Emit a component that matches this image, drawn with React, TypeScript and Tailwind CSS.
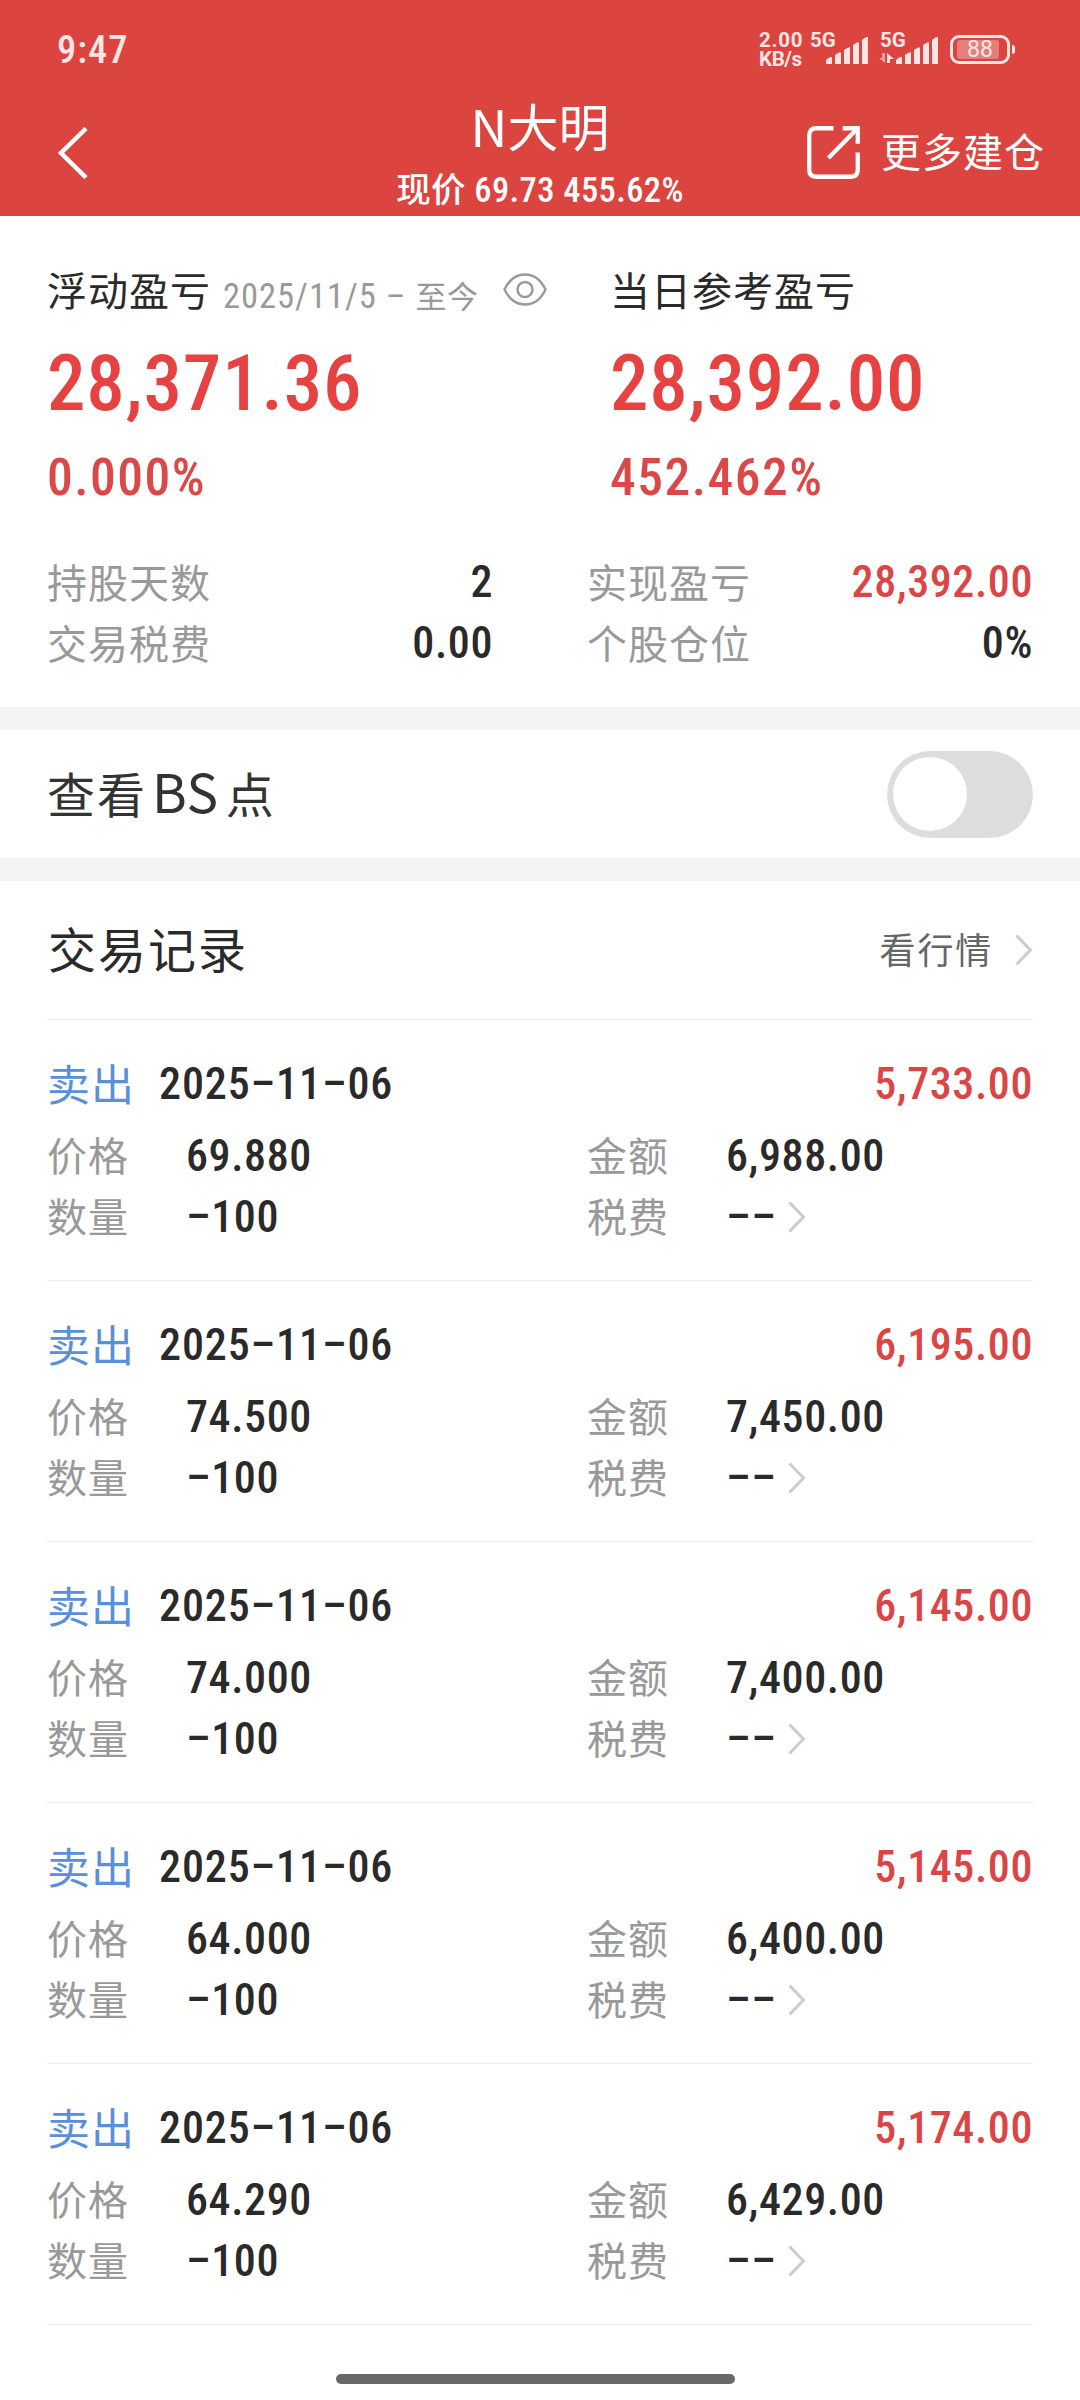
import { useState } from 'react'

interface TradeRecord {
  date: string
  profit: string
  price: string
  amount: string
  quantity: string
}

const RECORDS: TradeRecord[] = [
  { date: '2025–11–06', profit: '5,733.00', price: '69.880', amount: '6,988.00', quantity: '–100' },
  { date: '2025–11–06', profit: '6,195.00', price: '74.500', amount: '7,450.00', quantity: '–100' },
  { date: '2025–11–06', profit: '6,145.00', price: '74.000', amount: '7,400.00', quantity: '–100' },
  { date: '2025–11–06', profit: '5,145.00', price: '64.000', amount: '6,400.00', quantity: '–100' },
  { date: '2025–11–06', profit: '5,174.00', price: '64.290', amount: '6,429.00', quantity: '–100' },
]

const NUM = "font-['Roboto_Condensed','Noto_Sans_CJK_SC',sans-serif] font-medium"

function Chevron() {
  return (
    <svg width="18" height="32" viewBox="0 0 18 32" fill="none" className="shrink-0">
      <path d="M1.5 1.5L15.5 16L1.5 30.5" stroke="#cccccc" strokeWidth="3" />
    </svg>
  )
}

function Signal() {
  return (
    <svg width="42" height="27" viewBox="0 0 42 27" fill="#ffe6e5">
      <path d="M0 27V23L4 20H6V27Z" />
      <path d="M9 27V18L13 15.500H15V27Z" />
      <path d="M18 27V13L22 10.500H24V27Z" />
      <path d="M27 27V8L31 5.500H33V27Z" />
      <path d="M36 27V3L40 0H42V27Z" />
    </svg>
  )
}

function StatusBar() {
  return (
    <div className="flex h-[100px] justify-between pl-[57px] pr-[65px] text-[#ffe6e5]">
      <span className={`${NUM} pt-[30px] text-[38.5px] leading-[40px] tracking-[1px]`}>9:47</span>
      <div className="flex pt-[31px] font-['Roboto',sans-serif] text-[20.5px] font-bold leading-[19px]">
        <div className="w-[51px]">
          <div className="tracking-[0.8px]">2.00</div>
          <div className="tracking-[-0.4px]">KB/s</div>
        </div>
        <div className="relative w-[70px]">
          <span>5G</span>
          <div className="absolute left-[16px] top-[6px]"><Signal /></div>
        </div>
        <div className="relative w-[70px]">
          <span>5G</span>
          <svg width="16" height="11" viewBox="0 0 16 11" className="absolute left-[-1px] top-[22px]">
            <path d="M6 0V10L0 5H3V0Z" fill="#f0a09e" />
            <path d="M8 10V0L15 6H11V10Z" fill="#ffe6e5" />
          </svg>
          <div className="absolute left-[16px] top-[6px]"><Signal /></div>
        </div>
        <div className="mt-1 flex h-[29px] items-center">
          <div className="relative h-[29px] w-[60px] rounded-[9px] border-[3px] border-[#ffe6e5]">
            <div className="absolute left-[4px] top-[2px] h-[19px] w-[42px] rounded-[3px] bg-[#e57f7c]" />
            <div className="relative text-center text-[23px] font-normal leading-[24px]">88</div>
          </div>
          <div className="ml-[2px] h-[9px] w-[3px] rounded-r-full bg-[#ffe6e5]" />
        </div>
      </div>
    </div>
  )
}

function Header() {
  return (
    <header className="h-[216px] bg-[#dc4440] text-white">
      <StatusBar />
      <div className="flex h-[116px] justify-between">
        <button className="flex w-[340px] pl-[56px] pt-[27px]">
          <svg width="32" height="52" viewBox="0 0 32 52" fill="none">
            <path d="M30 1.500L5 26L30 50.500" stroke="#ffffff" strokeWidth="4.500" />
          </svg>
        </button>
        <div className="text-center">
          <h1 className="text-[51px] leading-[50px]">N大明</h1>
          <p className={`${NUM} mt-5 whitespace-nowrap text-[34.5px] leading-[40px] tracking-[0.4px]`}>现价 69.73 455.62%</p>
        </div>
        <button className="flex w-[340px] justify-end pr-[35px] pt-[26px]">
          <svg width="53" height="53" viewBox="0 0 52 52" fill="none" stroke="#ffffff" strokeWidth="4.200">
            <path d="M26 2.200H9Q2.200 2.200 2.200 9V43Q2.200 49.800 9 49.800H43Q49.800 49.800 49.800 43V26" />
            <path d="M35 2.200H49.800V17.500" />
            <path d="M21 31.500L49 3" />
          </svg>
          <span className="ml-[21px] text-[40px] leading-[49px] tracking-[1px]">更多建仓</span>
        </button>
      </div>
    </header>
  )
}

function Stat({ label, value, red }: { label: string; value: string; red?: boolean }) {
  return (
    <div className="flex h-[61px] items-center justify-between">
      <span className="text-[40px] tracking-[1px] text-[#999999]">{label}</span>
      <span className={`${NUM} pt-px text-[44px] tracking-[0.6px] ${red ? 'text-[#db4545]' : 'text-[#2a2a2a]'}`}>{value}</span>
    </div>
  )
}

function Profit({ amount, percent }: { amount: string; percent: string }) {
  return (
    <>
      <div className={`${NUM} mt-8 text-[77px] leading-[80px] tracking-[0.8px] text-[#e64242]`}>{amount}</div>
      <div className={`${NUM} mt-[26px] text-[51.5px] leading-[56px] tracking-[1.5px] text-[#db4848]`}>{percent}</div>
    </>
  )
}

function Summary() {
  return (
    <section className="h-[491px] px-[47px] pt-12">
      <div className="grid grid-cols-[563px_1fr]">
        <div>
          <div className="flex h-12 items-start">
            <h2 className="pt-px text-[40px] leading-[48px] tracking-[1px]">浮动盈亏</h2>
            <span className="ml-[12px] mt-[8px] w-[280px] whitespace-nowrap font-['Roboto_Condensed','Noto_Sans_CJK_SC',sans-serif] text-[34.5px] leading-[48px] tracking-[1px] text-[#999999]">
              2025/11/5 – <span className="text-[31px] tracking-[0.5px]">至今</span>
            </span>
            <svg width="44" height="33" viewBox="0 0 44 33" fill="none" stroke="#999999" strokeWidth="2.400" className="mt-[9px]">
              <path d="M1.500 16.500C6 7 13 1.500 22 1.500S38 7 42.500 16.500C38 26 31 31.500 22 31.500S6 26 1.500 16.500Z" />
              <circle cx="22" cy="16.500" r="7.500" />
            </svg>
          </div>
          <Profit amount="28,371.36" percent="0.000%" />
        </div>
        <div>
          <h2 className="h-12 pt-px text-[40px] leading-[48px] tracking-[1px]">当日参考盈亏</h2>
          <Profit amount="28,392.00" percent="452.462%" />
        </div>
      </div>
      <div className="mt-[45px] grid grid-cols-2 gap-x-[94px] leading-[61px]">
        <Stat label="持股天数" value="2" />
        <Stat label="实现盈亏" value="28,392.00" red />
        <Stat label="交易税费" value="0.00" />
        <Stat label="个股仓位" value="0%" />
      </div>
    </section>
  )
}

function Field({ label, value, arrow }: { label: string; value: string; arrow?: boolean }) {
  return (
    <div className="flex h-[61px] items-center leading-[59px]">
      <span className="w-[139px] text-[40px] tracking-[1px] text-[#999999]">{label}</span>
      <span className={`${NUM} pt-[3px] text-[44px] tracking-[0.6px]`}>{value}</span>
      {arrow && <div className="ml-3 pt-[2px]"><Chevron /></div>}
    </div>
  )
}

function RecordItem({ record }: { record: TradeRecord }) {
  return (
    <li className="h-[261px] border-b border-[#eeeeee] pt-[34px]">
      <div className="flex h-[60px] items-center">
        <span className="w-[112px] pb-1 text-[43px] leading-[56px] tracking-[1px] text-[#5a8fdc]">卖出</span>
        <span className={`${NUM} text-[44px] tracking-[0.9px]`}>{record.date}</span>
        <span className={`${NUM} ml-auto text-[44px] tracking-[0.6px] text-[#db4545]`}>{record.profit}</span>
      </div>
      <div className="mt-[10px] grid grid-cols-2 gap-x-[94px]">
        <Field label="价格" value={record.price} />
        <Field label="金额" value={record.amount} />
        <Field label="数量" value={record.quantity} />
        <Field label="税费" value="––" arrow />
      </div>
    </li>
  )
}

export default function App() {
  const [showPoints, setShowPoints] = useState(false)

  return (
    <main className="flex h-[2400px] w-[1080px] flex-col overflow-hidden bg-white font-['Noto_Sans_CJK_SC',sans-serif] text-[#2a2a2a]">
      <Header />
      <Summary />
      <div className="h-[23px] bg-[#f4f4f4]" />
      <section className="flex h-[128px] items-center justify-between px-[47px]">
        <h2 className="pb-[6px] text-[48px] leading-[64px] tracking-[2px] text-[#333333]">
          查看<span className="ml-[5px] mr-[7px] text-[53px] tracking-[0.5px]">BS</span>点
        </h2>
        <button
          role="switch"
          aria-checked={showPoints}
          onClick={() => setShowPoints(!showPoints)}
          className={`flex h-[87px] w-[146px] items-center rounded-full px-[6px] ${showPoints ? 'justify-end bg-[#dc4440]' : 'bg-[#dddddd]'}`}
        >
          <span className="h-[74px] w-[74px] rounded-full bg-white" />
        </button>
      </section>
      <div className="h-[23px] bg-[#f4f4f4]" />
      <section className="px-[47px]">
        <div className="flex h-[139px] items-center justify-between border-b border-[#eeeeee]">
          <h2 className="pb-[7px] pl-px text-[48px] leading-[64px] tracking-[2px]">交易记录</h2>
          <a className="flex items-center text-[36px] leading-[48px] tracking-[1.8px] text-[#666666]">
            <span className="mr-[22px] pb-[5px]">看行情</span>
            <Chevron />
          </a>
        </div>
        <ul>
          {RECORDS.map((record, i) => (
            <RecordItem key={i} record={record} />
          ))}
        </ul>
      </section>
      <div className="ml-[336px] mt-[49px] h-[10px] w-[399px] rounded-full bg-[#696969]" />
    </main>
  )
}
